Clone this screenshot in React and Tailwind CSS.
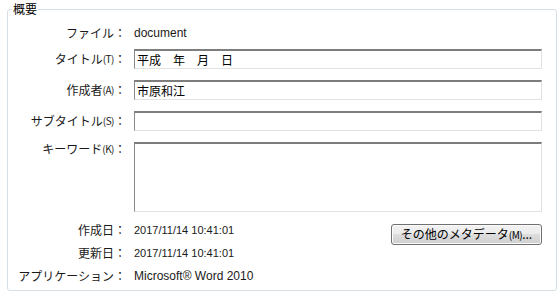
const jp = "font-['Noto_Sans_CJK_JP',sans-serif]";
const lat = "font-['Liberation_Sans','Noto_Sans_CJK_JP',sans-serif]";

function Label({ children, mn }) {
  return (
    <div className={`w-[118px] h-[20px] shrink-0 flex items-center justify-end whitespace-nowrap text-[12px] leading-[20px] text-[#1a1a1a] ${jp}`}>
      <span>{children}</span>
      {mn && <span className="text-[10px] tracking-[-0.5px]">({mn})</span>}
      <span>：</span>
    </div>
  );
}

function Field({ value = "", tall = false }) {
  return (
    <div
      className={`w-[408px] ${tall ? "h-[70px]" : "h-[20px]"} shrink-0 border-t-2 border-l border-r border-b border-t-[#7d7d7d] border-l-[#8a8a8a] border-r-[#e2e2e2] border-b-[#e2e2e2] bg-white pl-[2px] text-[12px] leading-[17px] text-black ${jp}`}
    >
      {value}
    </div>
  );
}

function Row({ children, className = "" }) {
  return <div className={`flex items-center gap-x-[8px] h-[20px] ${className}`}>{children}</div>;
}

export default function App() {
  return (
    <div className="w-[560px] h-[297px] bg-white">
      <fieldset className="ml-[7px] w-[550px] border border-[#d5dfe5] rounded-[3px] pt-[5px] pb-[4px]">
        <legend className={`ml-[4px] px-px text-[12px] leading-[18px] text-black ${jp}`}>概要</legend>

        <div className="flex flex-col">
          <Row>
            <Label>ファイル</Label>
            <span className={`text-[12px] text-[#1a1a1a] ${lat}`}>document</span>
          </Row>

          <Row className="mt-[6px]">
            <Label mn="T">タイトル</Label>
            <Field value="平成　年　月　日" />
          </Row>

          <Row className="mt-[11px]">
            <Label mn="A">作成者</Label>
            <Field value="市原和江" />
          </Row>

          <Row className="mt-[11px]">
            <Label mn="S">サブタイトル</Label>
            <Field />
          </Row>

          <div className="flex items-start gap-x-[8px] h-[70px] mt-[11px]">
            <div className="-mt-[3px]">
              <Label mn="K">キーワード</Label>
            </div>
            <Field tall />
          </div>

          <div className="flex items-start mt-[8px] pr-[14px]">
            <div className="flex flex-col gap-y-[3px]">
              <Row>
                <Label>作成日</Label>
                <span className={`text-[11px] text-[#1a1a1a] ${lat}`}>2017/11/14 10:41:01</span>
              </Row>
              <Row>
                <Label>更新日</Label>
                <span className={`text-[11px] text-[#1a1a1a] ${lat}`}>2017/11/14 10:41:01</span>
              </Row>
              <Row>
                <Label>アプリケーション</Label>
                <span className={`text-[12px] text-[#1a1a1a] ${lat}`}>Microsoft® Word 2010</span>
              </Row>
            </div>
            <button
              className={`ml-auto mt-[4px] w-[151px] h-[21px] rounded-[3px] border border-[#707070] bg-[linear-gradient(#f2f2f2_0%,#ebebeb_50%,#dddddd_50%,#cfcfcf_100%)] shadow-[inset_0_0_0_1px_#fbfbfb] text-[12px] leading-[18px] text-black ${jp}`}
            >
              その他のメタデータ<span className="text-[10px] tracking-[-0.5px]">(M)</span>...
            </button>
          </div>
        </div>
      </fieldset>
    </div>
  );
}
